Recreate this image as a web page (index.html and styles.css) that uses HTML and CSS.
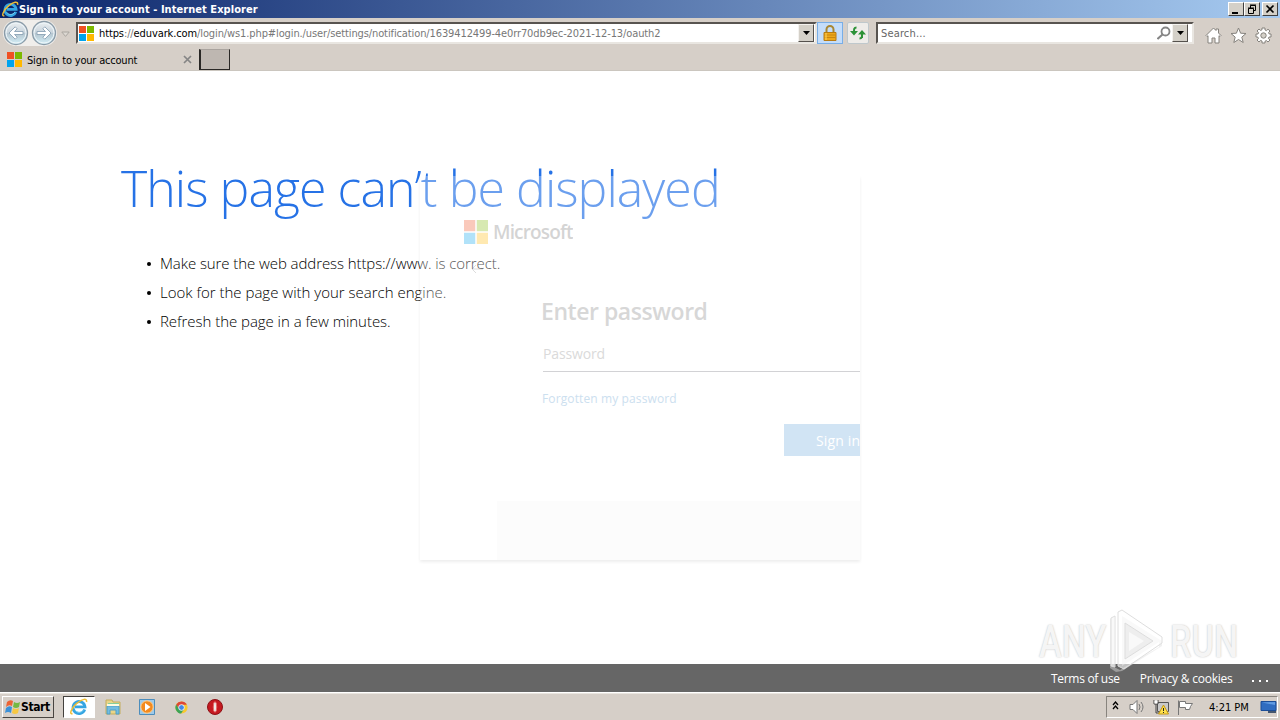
FILE: index.html
```html
<!DOCTYPE html>
<html lang="en">
<head>
    <meta charset="UTF-8">
    <meta name="viewport" content="width=device-width, initial-scale=1.0">
    <title>Sign in to your account</title>
    <link rel="stylesheet" href="styles.css">
</head>
<body>
    <svg class="defs" width="0" height="0">
        <symbol id="ie" viewBox="0 0 18 18">
            <path d="M14.7 11.5A6 6 0 1 1 15 8.9H5" fill="none" stroke="#35a5e2" stroke-width="2.8"/>
            <path d="M13.5 11.8A5 5 0 0 1 5 12" fill="none" stroke="#7dd2f5" stroke-width="1"/>
            <path d="M2.5 15.5C-1 17 1 10 7 5.2 12 1 17.3-.4 16.5 4" fill="none" stroke="#efbd36" stroke-width="1.5"/>
        </symbol>
        <symbol id="ms" viewBox="0 0 16 16">
            <path fill="#f05022" d="M0 0h7.5v7.5H0z"/>
            <path fill="#7db900" d="M8.5 0H16v7.5H8.5z"/>
            <path fill="#00a3ee" d="M0 8.5h7.5V16H0z"/>
            <path fill="#ffb800" d="M8.5 8.5H16V16H8.5z"/>
        </symbol>
        <symbol id="arrow" viewBox="0 0 26 26">
            <circle cx="13" cy="13" r="11.5" fill="url(#glass)" stroke="#8a9ba8" stroke-width="1.3"/>
            <circle cx="13" cy="13" r="10" fill="none" stroke="#eef6fa"/>
            <path d="M12.2 6.8 6 13l6.2 6.2 2-2-2.7-2.7H20v-3h-8.5l2.7-2.7z" fill="#fff" stroke="#8ba3b5" stroke-width=".9"/>
        </symbol>
        <linearGradient id="glass" x2="0" y2="1">
            <stop offset="0" stop-color="#edf1f3"/>
            <stop offset=".48" stop-color="#c9d4dc"/>
            <stop offset=".5" stop-color="#b4c4ce"/>
            <stop offset="1" stop-color="#d4f0f8"/>
        </linearGradient>
    </svg>

    <header class="titlebar">
        <svg class="ie-icon" width="17" height="17"><use href="#ie"/></svg>
        <span class="window-title">Sign in to your account - Internet Explorer</span>
        <div class="window-buttons">
            <span class="win-btn"><svg width="12" height="10"><path d="M2 9h6" stroke="#000" stroke-width="2"/></svg></span>
            <span class="win-btn"><svg width="12" height="10"><path d="M4.500 4V1.500h5v5H8M4 1h6" fill="none" stroke="#000"/><path d="M2.500 4.500h5v5h-5zM2 4h6" fill="none" stroke="#000"/></svg></span>
            <span class="win-btn close"><svg width="12" height="10"><path d="m2.500 1.500 7 7m0-7-7 7" stroke="#000" stroke-width="1.700"/></svg></span>
        </div>
    </header>

    <nav class="toolbar">
        <div class="history">
            <svg width="26" height="26"><use href="#arrow"/></svg>
            <svg class="forward" width="26" height="26"><use href="#arrow"/></svg>
        </div>
        <svg class="history-menu" width="9" height="7"><path d="M.8 1h7.4L4.5 5.4z" fill="#ddd9d3" stroke="#aaa6a0"/></svg>
        <div class="address">
            <svg width="15" height="15"><use href="#ms"/></svg>
            <span class="url"><b>https</b>://<b>eduvark.com</b>/login/ws1.php#login./user/settings/notification/1639412499-4e0rr70db9ec-2021-12-13/oauth2</span>
            <span class="drop"><svg width="7" height="4"><path d="M0 0h7L3.5 4z"/></svg></span>
        </div>
        <span class="lock">
            <svg width="14" height="17"><path d="M3.5 8V4.5a3.5 3.5 0 0 1 7 0V8" fill="none" stroke="#a88734" stroke-width="2"/><path d="M1 7.5h12v8H1z" fill="#eda81b" stroke="#b77b13"/><path d="M1.5 10h11m-11 2.5h11" stroke="#c98710"/><path d="M3 8v7" stroke="#ffd45c"/></svg>
        </span>
        <span class="refresh">
            <svg width="16" height="14"><path d="M6.5 1.5C4 1.5 4 3 4 6M12 12V6.5M9.5 12.5c2.5 0 2.5-1.500 2.500-4" fill="none" stroke="#2c9237" stroke-width="2"/><path d="M0 5h8L4 9.500zM8 8.500h8L12 4z" fill="#2c9237"/></svg>
        </span>
        <div class="search">
            <span>Search...</span>
            <svg width="14" height="14"><circle cx="8.500" cy="5.500" r="4" fill="none" stroke="#858585" stroke-width="1.800"/><path d="m5.500 8.500-5 4.500" stroke="#858585" stroke-width="2"/></svg>
            <span class="drop"><svg width="7" height="4"><path d="M0 0h7L3.500 4z"/></svg></span>
        </div>
        <div class="tools">
            <svg width="17" height="17"><path d="M1 8.500 8.500 1l2.500 2.500V2h2.500v4L16 8.500l-1 1-1-.8V16h-4v-5H7v5H3V8.700l-1 .8z" fill="#fff" stroke="#85827d"/></svg>
            <svg width="17" height="17"><path d="m8.500 1 2.100 5.200 5.400.3-4.200 3.600 1.400 5.400-4.700-3-4.700 3 1.400-5.400L1 6.500l5.400-.3z" fill="#fff" stroke="#85827d"/></svg>
            <svg width="17" height="17"><path d="M7 1h3v2l1.500.6L13 2.200 15 4l-1.400 1.500.6 1.500H16v3h-2l-.6 1.500L15 13l-2 2-1.500-1.400-1.500.6V16H7v-2l-1.500-.6L4 15l-2-2 1.400-1.500L2.800 10H1V7h2l.6-1.500L2 4l2-2 1.500 1.400L7 2.800z" fill="#fff" stroke="#85827d"/><circle cx="8.500" cy="8.500" r="2.700" fill="#d4d0c8" stroke="#85827d"/></svg>
        </div>
    </nav>

    <div class="tabs">
        <div class="tab">
            <svg width="15" height="15"><use href="#ms"/></svg>
            <span class="tab-title">Sign in to your account</span>
            <svg class="tab-close" width="9" height="9"><path d="m1 1 7 7m0-7L1 8" stroke="#858585" stroke-width="1.700"/></svg>
        </div>
        <div class="new-tab"></div>
    </div>

    <main class="page">
        <h1>This page can’t be displayed</h1>
        <ul class="tips">
            <li><span class="tip-address">Make sure the web address https://www. is correct.</span></li>
            <li><span class="tip-search">Look for the page with your search engine.</span></li>
            <li><span class="tip-refresh">Refresh the page in a few minutes.</span></li>
        </ul>

        <section class="card">
            <div class="brand">
                <svg width="24" height="24"><use href="#ms"/></svg>
                <span>Microsoft</span>
            </div>
            <svg class="back" width="12" height="10"><path d="M12 5H1m4-4L1 5l4 4" fill="none" stroke="#777"/></svg>
            <div class="form">
                <h2>Enter password</h2>
                <div class="field"><span>Password</span></div>
                <span class="forgot">Forgotten my password</span>
                <div class="sign-in"><span>Sign in</span></div>
            </div>
            <div class="card-bottom"></div>
        </section>

        <div class="watermark">
            <span>ANY</span>
            <svg width="58" height="64" viewBox="0 0 58 64">
                <path d="M3 59V10l4-2v50l6 3 39-23v-5L15 57V7l35 22 5 3v5L15 62l-6 1z" fill="#ddd" fill-opacity=".45"/>
                <path d="M4 57V9l4-2v51zM11 3l4-2 40 27v6L17 60l-6-3z" fill="#fff" fill-opacity=".6" stroke="#dedede"/>
                <path d="M18 14v36l28-18z" fill="#eee" stroke="#ddd"/>
                <path d="M22 23v19l15-10z" fill="#f9f9f9"/>
            </svg>
            <span>RUN</span>
        </div>
    </main>

    <footer class="page-footer">
        <span class="terms">Terms of use</span>
        <span class="privacy">Privacy &amp; cookies</span>
        <svg width="18" height="4"><path d="M1 1h2v2H1zm7 0h2v2H8zm7 0h2v2h-2z" fill="#fff"/></svg>
    </footer>

    <div class="taskbar">
        <div class="start">
            <svg width="17" height="16"><path d="M3 3q3-3 6-1L8 7Q5 5 2 8z" fill="#ed6435"/><path d="M10 3q3 2 6 0l-1 5q-3 2-6 0z" fill="#75b943"/><path d="M2 9q3-3 6-1l-1 6q-3-2-6 0z" fill="#3b91d9"/><path d="M9 9q3 2 6 0l-1 5q-3 2-6 0z" fill="#f7c843"/></svg>
            <span>Start</span>
        </div>
        <div class="apps">
            <div class="app active"><svg width="18" height="18"><use href="#ie"/></svg></div>
            <div class="app"><svg width="16" height="16"><path d="M1 3V1h6l1 2h7v12H1z" fill="#ead588" stroke="#c4ad5c"/><path d="M3 4h11v3H3z" fill="#85cf9c"/><path d="M2 7h12v8h-3v-4H5v4H2z" fill="#73bde1" stroke="#4e9ec7"/><path d="M2 6h12" stroke="#fffbe0" stroke-width="2"/></svg></div>
            <div class="app"><svg width="16" height="16"><path d="M.5.500h15v15H.5z" fill="#9ecaea" stroke="#4c8dbc"/><circle cx="8" cy="8" r="6.200" fill="#f38a1e" stroke="#ffd091"/><path d="m6 4 5.500 4L6 12z" fill="#fff"/></svg></div>
            <div class="app"><svg width="13" height="13" viewBox="0 0 16 16"><circle cx="8" cy="8" r="7.500" fill="#f7c82f"/><path d="M1.500 4.200A7.500 7.500 0 0 1 14.500 4.500H8L5 10z" fill="#de4637"/><path d="M1.500 4.200A7.500 7.500 0 0 0 7.500 15.500L11 10H5z" fill="#3ba357"/><circle cx="8" cy="8" r="3.500" fill="#4288e5" stroke="#fff"/></svg></div>
            <div class="app"><svg width="16" height="16"><circle cx="8" cy="8" r="7.500" fill="#c51920" stroke="#8e1116"/><ellipse cx="8" cy="8" rx="1.700" ry="5.200" fill="#f0e8e4" stroke="#e56868"/></svg></div>
        </div>
        <div class="tray">
            <svg class="chevrons" width="7" height="9"><path d="m1 4 2.500-3L6 4M1 8l2.500-3L6 8" fill="none" stroke="#000" stroke-width="1.300"/></svg>
            <svg class="volume" width="17" height="14"><path d="M1 4.500h3l4-4v13l-4-4H1z" fill="#fff" stroke="#777"/><path d="M10 4q2 3 0 6m2-8q4 5 0 10" fill="none" stroke="#777"/></svg>
            <svg class="network" width="16" height="16"><path d="M4.500 3.500h11v9h-11z" fill="#c9c9c9" stroke="#555"/><path d="M1 1v4h4V1M3 5v9h5" fill="none" stroke="#444"/><path d="M1.500 1.500h3v3h-3z" fill="#fff"/><path d="m10.500 6 5 9h-10z" fill="#ffe14c" stroke="#c69812"/><path d="M10.500 9v3m0 1v1" stroke="#222"/></svg>
            <svg class="flag" width="17" height="15"><path d="M1.500 15V.5M2.500 1.500h6v2h7l-2 3 -1 3h-4v-2h-6z" fill="#fff" stroke="#777"/></svg>
            <span class="clock">4:21 PM</span>
            <svg class="desktop" width="17" height="14"><path d="M1 1.500h15v9H1z" fill="#2f6cc0" stroke="#1b4d97"/><path d="m2 2.500 13-.5v3z" fill="#619ce3"/><path d="M8 12h8" stroke="#44566e" stroke-width="2"/></svg>
        </div>
    </div>
</body>
</html>
```
FILE: styles.css
```css
* {
    margin: 0;
    padding: 0;
    box-sizing: border-box;
}

body {
    width: 1280px;
    height: 720px;
    overflow: hidden;
    display: flex;
    flex-direction: column;
    background: #fff;
    font: 11px "DejaVu Sans Condensed", "DejaVu Sans", sans-serif;
    font-stretch: condensed;
    color: #000;
    white-space: nowrap;
}

svg {
    display: block;
    flex: none;
}

.defs {
    position: absolute;
}

.titlebar {
    height: 18px;
    flex: none;
    display: flex;
    align-items: center;
    padding: 0 2px;
    background: linear-gradient(90deg, #0a246a, #a6caf0);
    color: #fff;
}

.window-title {
    font-weight: bold;
    letter-spacing: 0.05px;
}

.window-buttons {
    display: flex;
    margin-left: auto;
}

.win-btn {
    width: 16px;
    height: 14px;
    padding: 1px;
    background: #d4d0c8;
    border: 1px solid;
    border-color: #fff #404040 #404040 #fff;
}

.close {
    margin-left: 2px;
}

.toolbar {
    height: 31px;
    flex: none;
    display: flex;
    align-items: flex-start;
    padding: 4px 8px 0 3px;
    background: #d6cfc8;
}

.history {
    display: flex;
    gap: 2px;
    margin-top: -2px;
    background: #f0eeeb;
    border-radius: 13px;
}

.forward {
    transform: scaleX(-1);
}

.history-menu {
    margin: 9px 0 0 4px;
}

.address,
.search {
    height: 22px;
    display: flex;
    align-items: center;
    background: #fff;
    border: 2px solid;
    border-color: #585450 #e9e6e1 #e9e6e1 #585450;
}

.address {
    width: 741px;
    margin-left: 6px;
    padding: 0 1px;
}

.url {
    margin-left: 5px;
    padding-top: 1px;
    color: #777;
    letter-spacing: -0.11px;
}

.url b {
    color: #000;
    font-weight: normal;
}

.drop {
    width: 16px;
    height: 18px;
    margin-left: auto;
    display: flex;
    align-items: center;
    justify-content: center;
    background: #d4d0c8;
    border: 1px solid;
    border-color: #f4f2ef #55514d #55514d #f4f2ef;
}

.lock {
    width: 26px;
    height: 22px;
    padding: 2px 5px;
    background: #c4ddfa;
    border: 1px solid #78aee7;
}

.refresh {
    width: 22px;
    height: 22px;
    margin-left: 4px;
    padding: 3px 2px;
    background: #eeece9;
    border: 1px solid #bfc8cc;
    border-radius: 2px;
}

.search {
    width: 318px;
    margin-left: 7px;
    padding: 0 4px 0 3px;
    color: #666;
    letter-spacing: 0.15px;
}

.search > span:first-child {
    padding-top: 1px;
}

.search > svg {
    margin-left: auto;
}

.search .drop {
    margin-left: 1px;
}

.tools {
    display: flex;
    gap: 8px;
    margin: 5px 0 0 auto;
}

.tabs {
    height: 22px;
    flex: none;
    display: flex;
    background: #d6cfc8;
    border-bottom: 1px solid #cbc6bf;
}

.tab {
    width: 199px;
    display: flex;
    align-items: center;
    padding: 0 7px;
    gap: 5px;
}

.tab-title {
    padding-top: 1px;
    letter-spacing: -0.2px;
}

.tab-close {
    margin-left: auto;
}

.new-tab {
    width: 31px;
    height: 21px;
    background: #beb7b1;
    border: 1px solid #292725;
    border-top-color: #aaa49f;
    border-left-width: 2px;
}

.page {
    position: relative;
    flex: 1;
    padding: 81px 0 0 121px;
    font-family: "Open Sans", sans-serif;
    font-stretch: normal;
}

h1 {
    height: 70px;
    line-height: 72px;
    font-size: 50px;
    font-weight: 300;
    color: #2672e6;
    letter-spacing: -0.94px;
}

.tips {
    margin-top: 27px;
    padding-left: 39px;
    font-size: 15px;
    font-weight: 300;
}

.tips li {
    height: 29px;
    line-height: 29px;
    list-style: none;
    display: flex;
    align-items: center;
}

.tips li::before {
    content: "";
    width: 4px;
    height: 4px;
    margin: 0 9px 0 -13px;
    border-radius: 50%;
    background: #000;
}

.tip-address {
    letter-spacing: -0.08px;
}

.tip-refresh {
    letter-spacing: -0.04px;
}

/* half-faded login box that sits over the error text */
.card {
    position: absolute;
    left: 420px;
    top: 105px;
    width: 440px;
    height: 384px;
    display: flex;
    flex-direction: column;
    background: rgba(255, 255, 255, 0.32);
    box-shadow: 0 2px 3px rgba(0, 0, 0, 0.07);
}

.brand {
    display: flex;
    gap: 5px;
    align-items: center;
    margin: 44px 0 0 44px;
    height: 23px;
    font-size: 19px;
    line-height: 20px;
    font-weight: 600;
    letter-spacing: -0.85px;
    color: #737373;
    opacity: 0.3;
}

.back {
    margin: 21px 0 0 51px;
    opacity: 0.25;
}

.form {
    width: 320px;
    margin: 21px 0 0 120px;
    overflow: hidden;
}

h2 {
    height: 32px;
    line-height: 32px;
    padding-left: 1px;
    font-size: 23px;
    font-weight: 600;
    letter-spacing: -0.45px;
    color: #d7d7d7;
}

.field {
    height: 45px;
    margin-left: 3px;
    padding-top: 17px;
    border-bottom: 1px solid #d2d2d5;
    font-size: 14px;
    line-height: 20px;
    letter-spacing: -0.15px;
    color: #dadada;
}

.forgot {
    display: block;
    margin: 17px 0 0 2px;
    height: 20px;
    line-height: 20px;
    font-size: 12px;
    letter-spacing: 0.12px;
    color: #cce0ef;
}

.sign-in {
    height: 32px;
    margin: 15px 0 0 244px;
    padding-left: 32px;
    overflow: hidden;
    background: #d1e4f4;
    color: #fff;
    font-size: 14px;
    line-height: 34px;
    letter-spacing: 0.15px;
}

.card-bottom {
    height: 59px;
    margin: auto 0 0 77px;
    background: rgba(0, 0, 0, 0.012);
}

/* runs past the page bottom, over the footer */
.watermark {
    position: absolute;
    z-index: 1;
    left: 1039px;
    top: 538px;
    height: 64px;
    display: flex;
    align-items: center;
    font-family: Roboto, sans-serif;
    font-size: 45px;
    font-weight: 500;
    color: #f5f5f5;
    text-shadow: 0 0 2px #bbb;
}

.watermark span {
    width: 68px;
    transform: scaleX(0.76);
    transform-origin: left;
}

.watermark svg {
    margin-right: 5px;
}

.page-footer {
    height: 28px;
    flex: none;
    display: flex;
    align-items: center;
    padding: 1px 11px 0 1051px;
    background: #666;
    color: #fff;
    font: 12px "Open Sans", sans-serif;
    letter-spacing: -0.3px;
}

.privacy {
    margin-left: 20px;
    letter-spacing: -0.22px;
}

.page-footer svg {
    margin: 4px 0 0 auto;
}

.taskbar {
    height: 28px;
    flex: none;
    display: flex;
    padding: 3px 2px 1px;
    background: #d6cfc8;
    border-top: 1px solid #fff;
    box-shadow: inset 0 1px #e9e5df;
}

.start {
    width: 52px;
    height: 22px;
    display: flex;
    align-items: center;
    padding-left: 1px;
    border: 1px solid;
    border-color: #fff #494541 #494541 #fff;
    font-size: 12px;
    font-weight: bold;
    letter-spacing: -0.4px;
}

.apps {
    display: flex;
    margin-left: 9px;
    gap: 2px;
}

.app {
    width: 32px;
    height: 22px;
    display: flex;
    align-items: center;
    justify-content: center;
}

.active {
    background: #fff;
    border: 1px solid;
    border-color: #44413e #fff #fff #44413e;
}

.tray {
    width: 172px;
    height: 22px;
    margin-left: auto;
    display: flex;
    align-items: center;
    padding-left: 5px;
    border: 1px solid;
    border-color: #88847e #fff #fff #88847e;
}

.chevrons {
    margin-top: -3px;
}

.volume {
    margin-left: 10px;
}

.network {
    margin-left: 7px;
}

.flag {
    margin-left: 8px;
}

.clock {
    margin-left: 15px;
}

.desktop {
    margin-left: auto;
}
```
